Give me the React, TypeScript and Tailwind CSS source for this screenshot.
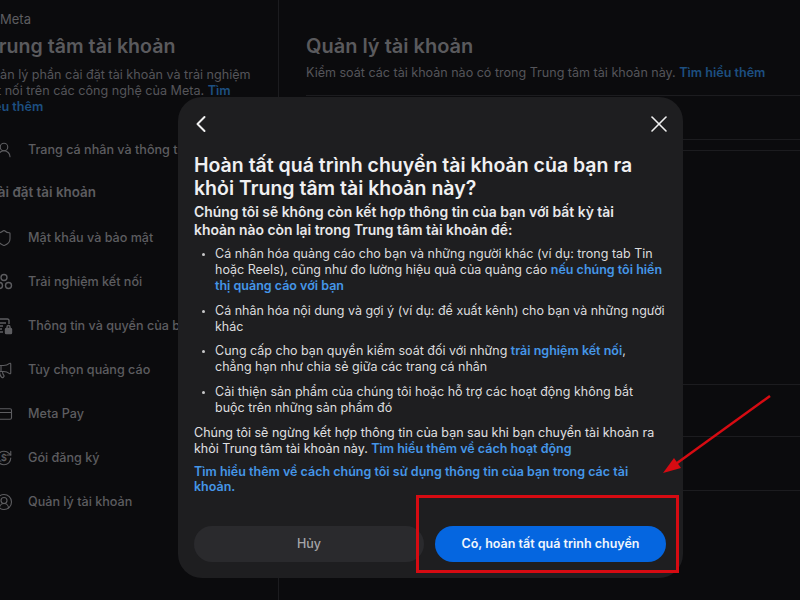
import { Fragment, type ReactNode } from "react";
import { ChevronLeft, CircleUserRound, CreditCard, Megaphone, RefreshCw, Shield, UserRound, X } from "lucide-react";

const Link = ({ children }: { children: ReactNode }) => <span className="font-semibold text-[#4596e8]">{children}</span>;

function ConnectIcon() {
  return (
    <svg width="18" height="18" viewBox="0 0 18 18" fill="none" stroke="currentColor" strokeWidth="1.4">
      <circle cx="9" cy="4.5" r="3" />
      <circle cx="4.5" cy="12.5" r="3" />
      <circle cx="13.5" cy="12.5" r="3" />
    </svg>
  );
}

function InfoLockIcon() {
  return (
    <svg width="18" height="18" viewBox="0 0 18 18" fill="none" stroke="currentColor" strokeWidth="1.4">
      <path d="M8 15H2.5a1.5 1.5 0 0 1-1.5-1.5v-10A1.5 1.5 0 0 1 2.5 2h10A1.5 1.5 0 0 1 14 3.5V7" />
      <path d="M4 6h7M4 9h4M4 12h3" />
      <rect x="10.5" y="11.5" width="6" height="5" rx="0.8" fill="currentColor" />
      <path d="M12 11.5V10a1.5 1.5 0 0 1 3 0v1.5" />
    </svg>
  );
}

function SubscriptionIcon() {
  return (
    <span className="relative block h-[18px] w-[18px]">
      <RefreshCw size={18} strokeWidth={1.5} />
      <span className="absolute inset-0 flex items-center justify-center text-[9px] font-semibold">$</span>
    </span>
  );
}

const navItems = [
  { icon: <Shield size={18} strokeWidth={1.5} />, label: "Mật khẩu và bảo mật" },
  { icon: <ConnectIcon />, label: "Trải nghiệm kết nối" },
  { icon: <InfoLockIcon />, label: "Thông tin và quyền của bạn" },
  { icon: <Megaphone size={18} strokeWidth={1.5} />, label: "Tùy chọn quảng cáo" },
  { icon: <CreditCard size={18} strokeWidth={1.5} />, label: "Meta Pay" },
  { icon: <SubscriptionIcon />, label: "Gói đăng ký" },
  { icon: <CircleUserRound size={18} strokeWidth={1.5} />, label: "Quản lý tài khoản" },
];

function NavRow({ icon, label }: { icon: ReactNode; label: string }) {
  return (
    <div className="flex h-[44px] items-center gap-[15px] whitespace-nowrap pl-[8px] text-[12.6px] font-medium text-[#5d5d60]">
      <span className="w-[18px] shrink-0">{icon}</span>
      {label}
    </div>
  );
}

export default function App() {
  const bullets: ReactNode[] = [
    <Fragment>Cá nhân hóa quảng cáo cho bạn và những người khác (ví dụ: trong tab Tin hoặc Reels), cũng như đo lường hiệu quả của quảng cáo <Link>nếu chúng tôi hiển thị quảng cáo với bạn</Link></Fragment>,
    <Fragment>Cá nhân hóa nội dung và gợi ý (ví dụ: để xuất kênh) cho bạn và những người khác</Fragment>,
    <Fragment>Cung cấp cho bạn quyền kiểm soát đối với những <Link>trải nghiệm kết nối</Link>,<br />chẳng hạn như chia sẻ giữa các trang cá nhân</Fragment>,
    <Fragment>Cải thiện sản phẩm của chúng tôi hoặc hỗ trợ các hoạt động không bắt<br />buộc trên những sản phẩm đó</Fragment>,
  ];

  return (
    <div className="relative flex h-[600px] w-[800px] overflow-hidden bg-[#0b0b0d] font-['Inter',sans-serif]">
      <aside className="-ml-[13px] h-full w-[292px] shrink-0 border-r border-[#1c1c1f] pr-[16px] pt-[10px]">
        <div className="pl-[13px] text-[13px] leading-[18px] text-[#5d5d60]">Meta</div>
        <h2 className="mt-[5px] whitespace-nowrap text-[19.6px] font-semibold leading-[26px] text-[#5a5a5d]">Trung tâm tài khoản</h2>
        <p className="-ml-[4px] mt-[8px] max-w-[270px] text-[12.6px] leading-[16px] text-[#55555a]">
          Quản lý phần cài đặt tài khoản và trải nghiệm kết nối trên các công nghệ của Meta. <span className="font-semibold text-[#1d4f80]">Tìm hiểu thêm</span>
        </p>
        <div className="mt-[13px]">
          <NavRow icon={<UserRound size={18} strokeWidth={1.5} />} label="Trang cá nhân và thông tin" />
        </div>
        <div className="mt-[3px] h-[34px] pl-[1px] text-[13.4px] font-semibold leading-[34px] text-[#5d5d60]">Cài đặt tài khoản</div>
        <div className="mt-[7px]">
          {navItems.map((n) => (
            <NavRow key={n.label} icon={n.icon} label={n.label} />
          ))}
        </div>
      </aside>

      <main className="flex-1 pl-[27px] pt-[33px]">
        <h1 className="text-[20px] font-semibold leading-[26px] text-[#5a5a5d]">Quản lý tài khoản</h1>
        <p className="mt-[5px] whitespace-nowrap text-[12.56px] leading-[18px] text-[#55555a]">
          Kiểm soát các tài khoản nào có trong Trung tâm tài khoản này. <span className="font-semibold text-[#1d4f80]">Tìm hiểu thêm</span>
        </p>
        <div className="mt-[13px] h-[44px] border-t border-[#1c1c1f]" />
        <div className="h-[11px] border-t border-[#1c1c1f]" />
        <div className="h-[234px] border-t border-[#1c1c1f]" />
        <div className="h-[52px] border-t border-[#1c1c1f]" />
        <div className="h-[54px] border-t border-[#1c1c1f]" />
        <div className="border-t border-[#1c1c1f]" />
      </main>

      {/* dialog */}
      <div className="absolute left-[178px] top-[97px] flex h-[481px] w-[505px] flex-col rounded-[24px] bg-[#1e1e20] px-[16px] text-[#e8e8ea]">
        <div className="flex h-[54px] shrink-0 items-center justify-between">
          <ChevronLeft size={28} strokeWidth={1.7} className="-ml-[7px] text-[#f0f0f0]" />
          <X size={28} strokeWidth={1.4} className="-mr-[6px] text-[#f0f0f0]" />
        </div>
        <h3 className="mt-[3px] text-[19.5px] font-semibold leading-[23px] text-[#f0f0f2]">
          Hoàn tất quá trình chuyển tài khoản của bạn ra khỏi Trung tâm tài khoản này?
        </h3>
        <p className="mt-[3px] max-w-[455px] text-[13.9px] font-semibold leading-[18px] text-[#e8e8ea]">
          Chúng tôi sẽ không còn kết hợp thông tin của bạn với bất kỳ tài khoản nào còn lại trong Trung tâm tài khoản để:
        </p>
        <ul className="mt-[7px] flex flex-col gap-[8.5px] pl-[21px] text-[12.5px] leading-[16px] text-[#dcdcde]">
          {bullets.map((b, i) => (
            <li key={i} className="relative">
              <span className="absolute -left-[13px] top-[7px] h-[3px] w-[3px] rounded-full bg-[#c8c8ca]" />
              {b}
            </li>
          ))}
        </ul>
        <p className="mt-[9px] text-[12.5px] leading-[16px] text-[#e0e0e2]">
          Chúng tôi sẽ ngừng kết hợp thông tin của bạn sau khi bạn chuyển tài khoản ra khỏi Trung tâm tài khoản này. <Link>Tìm hiểu thêm về cách hoạt động</Link>
        </p>
        <p className="mt-[7px] text-[12.5px] font-semibold leading-[15px] text-[#4596e8]">
          Tìm hiểu thêm về cách chúng tôi sử dụng thông tin của bạn trong các tài khoản.
        </p>
        <div className="mb-[16px] mt-auto flex gap-[11px]">
          <button className="h-[36px] w-[230px] rounded-full bg-[#2a2a2d] text-[12.5px] font-medium text-[#a6a6a9]">Hủy</button>
          <button className="h-[36px] w-[231px] rounded-full bg-[#0566e0] text-[12.5px] font-semibold text-[#f2f6fc]">Có, hoàn tất quá trình chuyển</button>
        </div>
      </div>

      {/* annotation */}
      <div className="absolute left-[416px] top-[495px] h-[78px] w-[263px] border-[3px] border-[#d60b12]" />
      <svg className="absolute left-[655px] top-[385px]" width="125" height="100" viewBox="0 0 125 100">
        <path d="M115 11 L18 81" stroke="#d60b12" strokeWidth="2.5" fill="none" />
        <path d="M8 88 L19 73 L26 83 Z" fill="#d60b12" />
      </svg>
    </div>
  );
}
